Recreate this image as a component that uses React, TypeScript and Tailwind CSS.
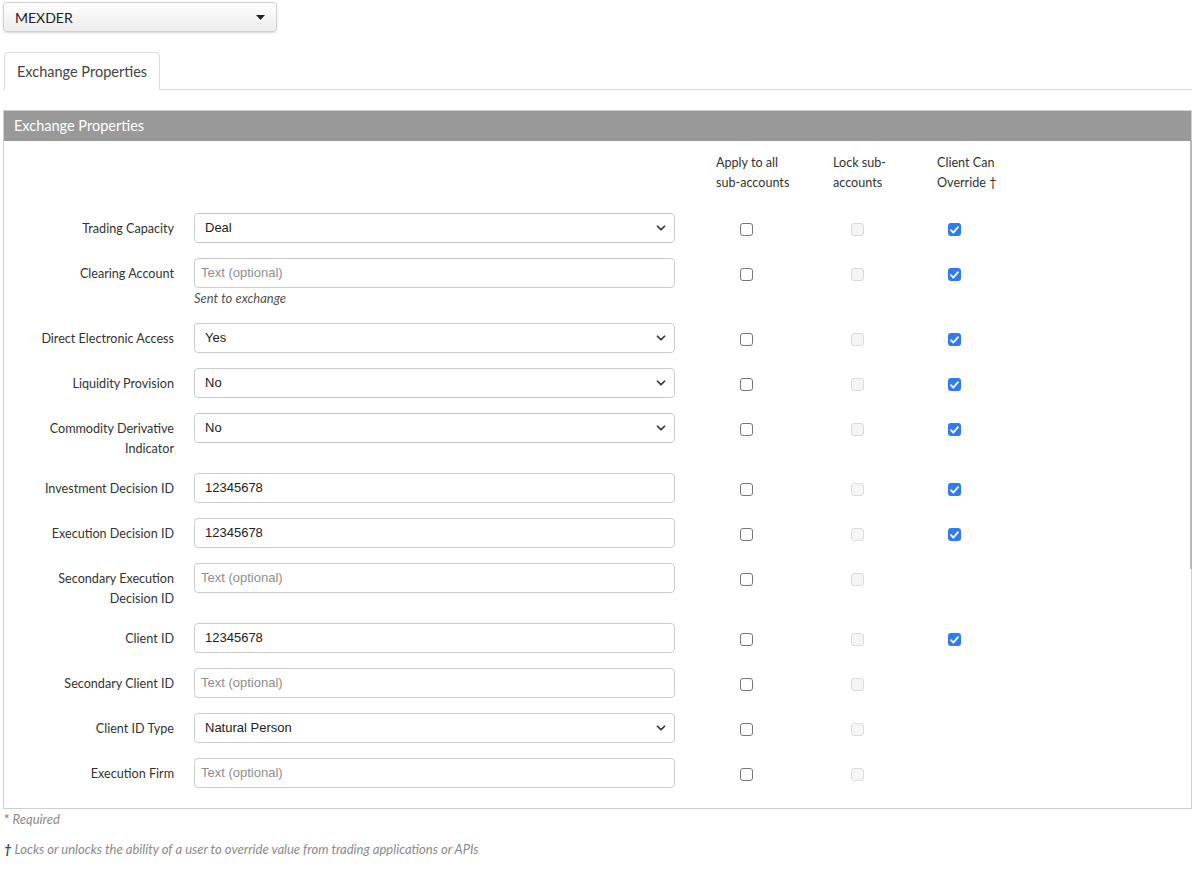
import { ChevronDown } from 'lucide-react';

type Row = {
  label: string[];
  kind: 'select' | 'text';
  value?: string;
  help?: string;
  override: boolean;
};

const rows: Row[] = [
  { label: ['Trading Capacity'], kind: 'select', value: 'Deal', override: true },
  { label: ['Clearing Account'], kind: 'text', help: 'Sent to exchange', override: true },
  { label: ['Direct Electronic Access'], kind: 'select', value: 'Yes', override: true },
  { label: ['Liquidity Provision'], kind: 'select', value: 'No', override: true },
  { label: ['Commodity Derivative', 'Indicator'], kind: 'select', value: 'No', override: true },
  { label: ['Investment Decision ID'], kind: 'text', value: '12345678', override: true },
  { label: ['Execution Decision ID'], kind: 'text', value: '12345678', override: true },
  { label: ['Secondary Execution', 'Decision ID'], kind: 'text', override: false },
  { label: ['Client ID'], kind: 'text', value: '12345678', override: true },
  { label: ['Secondary Client ID'], kind: 'text', override: false },
  { label: ['Client ID Type'], kind: 'select', value: 'Natural Person', override: false },
  { label: ['Execution Firm'], kind: 'text', override: false },
];

export default function App() {
  return (
    <main className="min-h-screen bg-white text-[#333] font-['Lato','Noto_Sans',sans-serif]">
      {/* exchange picker */}
      <div className="pt-[2px] pl-[3px]">
        <div className="w-[274px] h-[30px] flex items-center justify-between pl-[11px] pr-[11px] rounded-[4px] border border-[#d0d0d0] bg-gradient-to-b from-white to-[#ececec] shadow-[0_1px_2px_rgba(0,0,0,0.15)]">
          <span className="text-[14px] text-[#222]">MEXDER</span>
          <svg width="9" height="5" viewBox="0 0 9 5">
            <path d="M0 0h9L4.5 5z" fill="#222" />
          </svg>
        </div>
      </div>

      {/* tabs */}
      <div className="mt-[20px] flex border-b border-[#dcdcdc] ml-[3px] mr-[3px]">
        <div className="ml-[1px] -mb-px h-[38px] px-[12px] flex items-center rounded-t-[4px] border border-b-0 border-[#dcdcdc] bg-white text-[14.5px] text-[#444]">
          Exchange Properties
        </div>
      </div>

      {/* panel */}
      <section className="mt-[20px] mx-[3px] border border-[#cfcfcf] relative">
        <div className="h-[30px] bg-[#999999] flex items-center px-[10px] text-[14.5px] text-white">
          Exchange Properties
        </div>
        <div className="absolute right-[-1px] top-[30px] h-[428px] w-[2px] bg-[#b8b8b8]" />

        <div className="pt-[12px] pb-[5px]">
          {/* column headers */}
          <div className="flex text-[12.6px] leading-[20px] text-[#333]">
            <div className="w-[712px]" />
            <div className="w-[117px]">Apply to all<br />sub-accounts</div>
            <div className="w-[104px]">Lock sub-<br />accounts</div>
            <div>Client Can<br />Override †</div>
          </div>

          <div className="mt-[20px]">
            {rows.map((r) => (
              <FieldRow key={r.label.join(' ')} row={r} />
            ))}
          </div>
        </div>
      </section>

      {/* notes */}
      <div className="pl-[4px] mt-[1px] text-[13px] italic text-[#8a8a8a] leading-[18px]">
        <p><span className="not-italic text-[#777]">*</span> Required</p>
        <p className="mt-[12px]"><span className="text-[#444] font-bold">†</span> Locks or unlocks the ability of a user to override value from trading applications or APIs</p>
      </div>
    </main>
  );
}

function FieldRow({ row }: { row: Row }) {
  return (
    <div className="flex mb-[15px]">
      <div className="w-[170px] pt-[6px] -mb-[1px] text-right text-[12.6px] leading-[20px] text-[#333] whitespace-nowrap">
        {row.label.map((l) => (
          <div key={l}>{l}</div>
        ))}
      </div>
      <div className="ml-[20px] w-[481px]">
        {row.kind === 'select' ? (
          <div className="h-[30px] rounded-[4px] border border-[#cdcdcd] flex items-center justify-between pl-[10px] pr-[6px] font-['Liberation_Sans',sans-serif] text-[13px] text-[#222]">
            <span>{row.value}</span>
            <ChevronDown size={14} strokeWidth={3} className="text-[#333]" />
          </div>
        ) : (
          <div className="h-[30px] rounded-[4px] border border-[#cdcdcd] flex items-center font-['Liberation_Sans',sans-serif] text-[13px]">
            {row.value ? (
              <span className="pl-[10px] text-[#222]">{row.value}</span>
            ) : (
              <span className="pl-[6px] text-[#8e8e8e]">Text (optional)</span>
            )}
          </div>
        )}
        {row.help && (
          <p className="italic text-[13px] leading-[20px] text-[#555]">{row.help}</p>
        )}
      </div>
      <div className="ml-[41px] flex pt-[10px]">
        <div className="w-[117px] pl-[24px]">
          <Box state="empty" />
        </div>
        <div className="w-[104px] pl-[18px]">
          <Box state="disabled" />
        </div>
        <div className="pl-[11px]">
          {row.override && <Box state="checked" />}
        </div>
      </div>
    </div>
  );
}

function Box({ state }: { state: 'empty' | 'disabled' | 'checked' }) {
  if (state === 'checked') {
    return (
      <span className="w-[13px] h-[13px] rounded-[3px] bg-[#2f7bf5] flex items-center justify-center">
        <svg width="9" height="8" viewBox="0 0 9 8">
          <path d="M1 4.2l2.3 2.4L8 1.2" fill="none" stroke="white" strokeWidth="1.8" strokeLinecap="round" strokeLinejoin="round" />
        </svg>
      </span>
    );
  }
  if (state === 'disabled') {
    return <span className="block w-[13px] h-[13px] rounded-[3px] border border-[#dadada] bg-[#f5f5f5]" />;
  }
  return <span className="block w-[13px] h-[13px] rounded-[3px] border border-[#767676] bg-white" />;
}
